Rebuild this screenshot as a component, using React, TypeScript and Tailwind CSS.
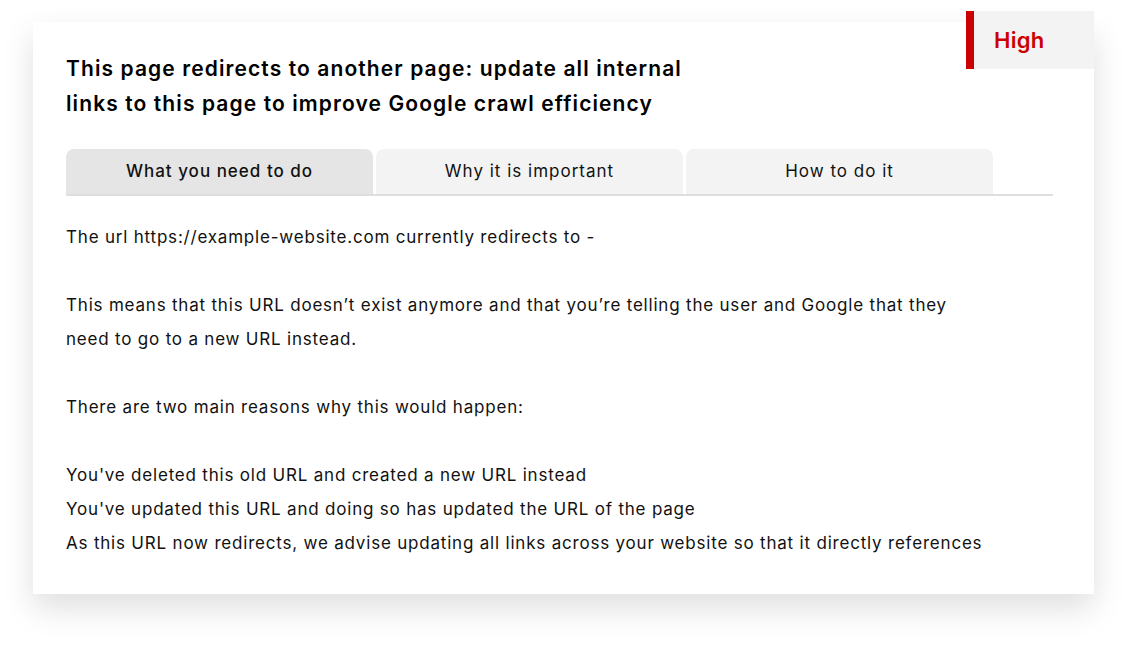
import React from "react";

const font = { fontFamily: "Inter, 'Noto Sans', sans-serif" };

export default function App() {
  return (
    <div className="w-[1128px] h-[649px] bg-white overflow-hidden" style={font}>
      <div className="pt-[22px] pl-[33px]">
        <div className="relative w-[1061px] h-[572px] bg-white shadow-[0_14px_30px_rgba(0,0,0,0.13)] pt-[29px] pl-[33px]">
          <div className="absolute right-0 top-[-11px] w-[128px] h-[58px] bg-[#f3f3f3] border-l-[8px] border-[#cc0000] flex items-center pl-[20px]">
            <span className="text-[22px] font-semibold text-[#cc0000] leading-none tracking-[0.3px]">High</span>
          </div>
          <h1 className="text-[21px] font-semibold leading-[35px] text-black whitespace-nowrap tracking-[1.1px]">
            This page redirects to another page: update all internal
            <br />
            links to this page to improve Google crawl efficiency
          </h1>
          <div className="mt-[28px] w-[987px] border-b-2 border-[#dedede] flex gap-[3px] items-end">
            <div className="w-[307px] h-[45px] bg-[#e5e5e5] rounded-t-[8px] flex items-center justify-center text-[17px] font-medium text-[#111] tracking-[1px]">
              What you need to do
            </div>
            <div className="w-[307px] h-[45px] bg-[#f3f3f3] rounded-t-[8px] flex items-center justify-center text-[17px] text-[#111] tracking-[1px]">
              Why it is important
            </div>
            <div className="w-[307px] h-[45px] bg-[#f3f3f3] rounded-t-[8px] flex items-center justify-center text-[17px] text-[#111] tracking-[1px]">
              How to do it
            </div>
          </div>
          <div className="mt-[24px] text-[17px] leading-[34px] text-[#111] whitespace-nowrap tracking-[0.8px]">
            <p>The url https://example-website.com currently redirects to -</p>
            <p className="mt-[34px]">
              This means that this URL doesn’t exist anymore and that you’re telling the user and Google that they
              <br />
              need to go to a new URL instead.
            </p>
            <p className="mt-[34px]">There are two main reasons why this would happen:</p>
            <p className="mt-[34px]">You've deleted this old URL and created a new URL instead</p>
            <p>You've updated this URL and doing so has updated the URL of the page</p>
            <p>As this URL now redirects, we advise updating all links across your website so that it directly references</p>
          </div>
        </div>
      </div>
    </div>
  );
}
